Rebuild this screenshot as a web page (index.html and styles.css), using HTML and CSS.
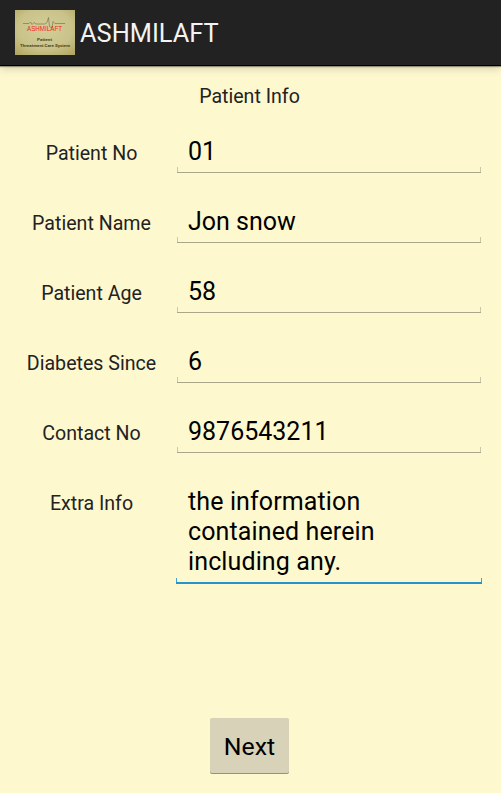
FILE: index.html
```
<!DOCTYPE html>
<html lang="en">

<head>
    <meta charset="UTF-8">
    <title>ASHMILAFT</title>
    <link rel="stylesheet" href="styles.css">
</head>

<body>

    <div class="screen">

        <div class="action-bar">
            <svg class="logo" width="60" height="45" viewBox="0 0 60 45">
                <defs>
                    <radialGradient id="paper" cx="50%" cy="42%" r="75%">
                        <stop offset="0" stop-color="#d3ce98" />
                        <stop offset="0.6" stop-color="#c9c38a" />
                        <stop offset="1" stop-color="#b0a45f" />
                    </radialGradient>
                </defs>
                <rect width="60" height="45" fill="url(#paper)" />
                <path d="M8 13.500H14L15.500 12L17 14.500L19 12.500L21 14H30L32 12.500L33.500 7.500L34.500 16.500L37 18L38 11.500L40 13.500H50" fill="none" stroke="#6d6a42" stroke-width="0.6" />
                <text x="12" y="21" textLength="35" lengthAdjust="spacingAndGlyphs" class="logo-name">ASHMILAFT</text>
                <text x="22" y="31" textLength="15" lengthAdjust="spacingAndGlyphs" class="logo-small">Patient</text>
                <text x="5" y="36.500" textLength="50" lengthAdjust="spacingAndGlyphs" class="logo-small">Threatment Care System</text>
            </svg>
            <h1>ASHMILAFT</h1>
        </div>

        <form class="patient-form">
            <h2>Patient Info</h2>

            <div class="row">
                <label for="no">Patient No</label>
                <input type="text" id="no" value="01">
            </div>
            <div class="row">
                <label for="name">Patient Name</label>
                <input type="text" id="name" value="Jon snow">
            </div>
            <div class="row">
                <label for="age">Patient Age</label>
                <input type="text" id="age" value="58">
            </div>
            <div class="row">
                <label for="since">Diabetes Since</label>
                <input type="text" id="since" value="6">
            </div>
            <div class="row">
                <label for="contact">Contact No</label>
                <input type="text" id="contact" value="9876543211">
            </div>
            <div class="row extra">
                <label for="extra">Extra Info</label>
                <textarea id="extra" class="active" spellcheck="false">the information
contained herein
including any.</textarea>
            </div>

            <button type="button" class="next">Next</button>
        </form>

    </div>

</body>

</html>
```
FILE: styles.css
```
* {
    box-sizing: border-box;
}

body {
    margin: 0;
    background: #fff;
    font-family: Roboto, sans-serif;
}

.screen {
    height: 793px;
    background: #fef8cf;
    overflow: hidden;
}

.action-bar {
    display: flex;
    align-items: center;
    height: 66px;
    padding-left: 15px;
    background: #222;
    border-bottom: 1px solid #000;
    box-shadow: 0 1px 1px rgba(0, 0, 0, 0.35), 0 2px 9px rgba(0, 0, 0, 0.18);
}

.action-bar h1 {
    margin: 1px 0 0 5px;
    color: #f3f3f3;
    font-size: 25.4px;
    font-weight: 400;
    line-height: 30px;
}

.logo-name {
    fill: #f02a18;
    font-family: "Liberation Sans", sans-serif;
    font-size: 7.5px;
}

.logo-small {
    fill: #4a4722;
    font-size: 4px;
    font-weight: bold;
}

.patient-form {
    display: flex;
    flex-direction: column;
    padding: 19px 19px 0 7px;
}

.patient-form h2 {
    margin: 0 0 24px;
    padding-left: 10px;
    color: #222;
    font-size: 19.6px;
    font-weight: 400;
    line-height: 24px;
    text-align: center;
}

.row {
    display: grid;
    grid-template-columns: 169px 1fr;
    height: 70px;
}

label {
    padding-top: 9px;
    color: #222;
    font-size: 19.6px;
    line-height: 24px;
    text-align: center;
}

input,
textarea {
    width: 100%;
    height: 40px;
    margin: 0;
    padding: 3px 12px 7px;
    border: 0;
    border-radius: 0;
    outline: 0;
    color: #000;
    font: 25px/30px Roboto, sans-serif;
    resize: none;
    overflow: hidden;
    /* underline with a short tick at each end */
    background:
        linear-gradient(#aaa68a, #aaa68a) 1px 100% / 304px 1px no-repeat,
        linear-gradient(#cdc8a6, #cdc8a6) 1px 100% / 1px 6px no-repeat,
        linear-gradient(#cdc8a6, #cdc8a6) 304px 100% / 1px 6px no-repeat;
}

.extra {
    height: 101px;
}

textarea.active {
    height: 101px;
    padding-top: 4px;
    letter-spacing: 0.12px;
    background:
        linear-gradient(#2494cb, #2494cb) 0 100% / 306px 2px no-repeat,
        linear-gradient(#45a2cd, #45a2cd) 0 100% / 1px 6px no-repeat,
        linear-gradient(#45a2cd, #45a2cd) 305px 100% / 1px 6px no-repeat;
}

.next {
    align-self: center;
    width: 79px;
    height: 55px;
    margin: 134px 0 0 9px;
    padding: 3px 0 0 1px;
    border: 0;
    border-radius: 2px;
    background: #d7d2b8;
    box-shadow: 0 1px 0 #96917c;
    color: #000;
    font: 24.8px/30px Roboto, sans-serif;
}
```
